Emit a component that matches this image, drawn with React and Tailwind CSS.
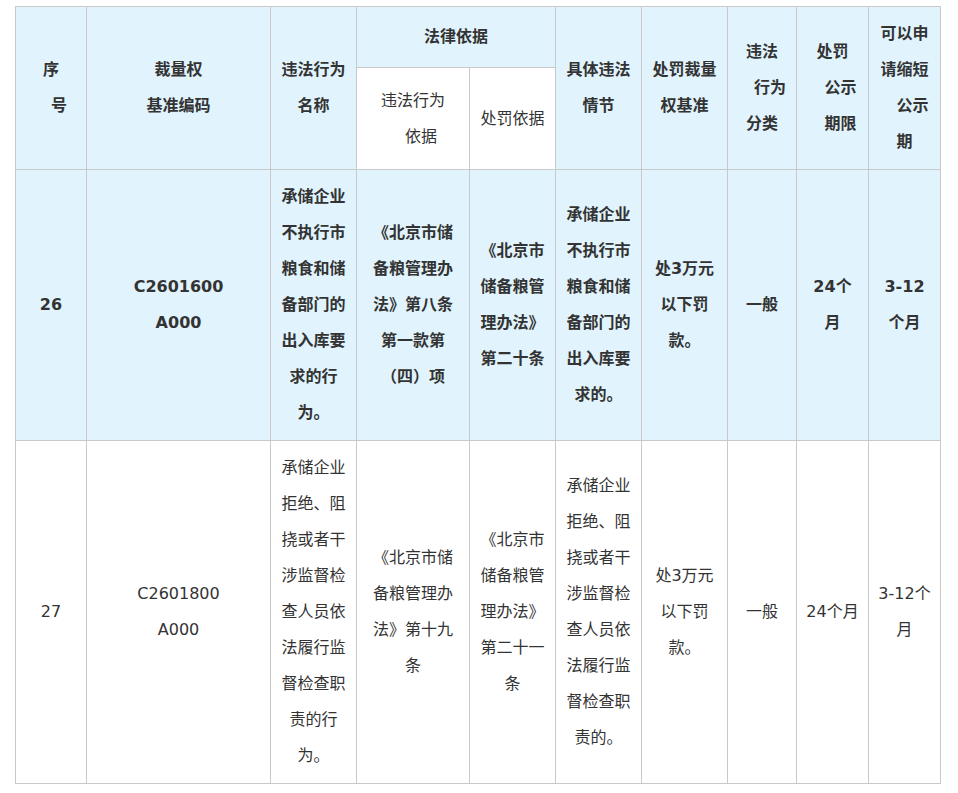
import React from "react";

const FONT = { fontFamily: '"DejaVu Sans", "Noto Sans CJK SC", sans-serif' };

function Cell({ lines, className = "", bold = false, white = false }) {
  return (
    <div
      className={
        "flex flex-col items-center justify-center text-center text-[16px] leading-[36px] text-[#333] " +
        (bold ? "font-bold " : "font-normal ") +
        (white ? "bg-white " : "bg-[#e1f3fd] ") +
        className
      }
    >
      {lines.map((l, i) => {
        const shift = typeof l === "object";
        const text = shift ? l.t : l;
        return (
          <div key={i} className={"whitespace-nowrap " + (shift ? "pl-4" : "")}>
            {text}
          </div>
        );
      })}
    </div>
  );
}

export default function App() {
  return (
    <div className="min-h-[793px] w-[958px] bg-white pt-[6px] pl-[15px]" style={FONT}>
      <div className="grid w-[926px] grid-cols-[70px_183px_85px_112px_85px_85px_85px_68px_71px_71px] grid-rows-[60px_101px_270px_342px] gap-px border border-[#c9c9c9] bg-[#c9c9c9]">
        {/* Header */}
        <Cell bold className="col-start-1 row-start-1 row-span-2" lines={["序", { t: "号" }]} />
        <Cell bold className="col-start-2 row-start-1 row-span-2" lines={["裁量权", "基准编码"]} />
        <Cell bold className="col-start-3 row-start-1 row-span-2" lines={["违法行为", "名称"]} />
        <Cell bold className="col-start-4 col-span-2 row-start-1" lines={["法律依据"]} />
        <Cell bold className="col-start-6 row-start-1 row-span-2" lines={["具体违法", "情节"]} />
        <Cell bold className="col-start-7 row-start-1 row-span-2" lines={["处罚裁量", "权基准"]} />
        <Cell bold className="col-start-8 row-start-1 row-span-2" lines={["违法", { t: "行为" }, "分类"]} />
        <Cell bold className="col-start-9 row-start-1 row-span-2" lines={["处罚", { t: "公示" }, { t: "期限" }]} />
        <Cell bold className="col-start-10 row-start-1 row-span-2" lines={["可以申", "请缩短", { t: "公示" }, "期"]} />
        <Cell white className="col-start-4 row-start-2" lines={["违法行为", { t: "依据" }]} />
        <Cell white className="col-start-5 row-start-2" lines={["处罚依据"]} />

        {/* Row 26 */}
        <Cell bold className="col-start-1 row-start-3" lines={["26"]} />
        <Cell bold className="col-start-2 row-start-3" lines={["C2601600", "A000"]} />
        <Cell
          bold
          className="col-start-3 row-start-3"
          lines={["承储企业", "不执行市", "粮食和储", "备部门的", "出入库要", "求的行", "为。"]}
        />
        <Cell
          bold
          className="col-start-4 row-start-3"
          lines={["《北京市储", "备粮管理办", "法》第八条", "第一款第", "（四）项"]}
        />
        <Cell bold className="col-start-5 row-start-3" lines={["《北京市", "储备粮管", "理办法》", "第二十条"]} />
        <Cell
          bold
          className="col-start-6 row-start-3"
          lines={["承储企业", "不执行市", "粮食和储", "备部门的", "出入库要", "求的。"]}
        />
        <Cell bold className="col-start-7 row-start-3" lines={["处3万元", "以下罚", "款。"]} />
        <Cell bold className="col-start-8 row-start-3" lines={["一般"]} />
        <Cell bold className="col-start-9 row-start-3" lines={["24个", "月"]} />
        <Cell bold className="col-start-10 row-start-3" lines={["3-12", "个月"]} />

        {/* Row 27 */}
        <Cell white className="col-start-1 row-start-4" lines={["27"]} />
        <Cell white className="col-start-2 row-start-4" lines={["C2601800", "A000"]} />
        <Cell
          white
          className="col-start-3 row-start-4"
          lines={["承储企业", "拒绝、阻", "挠或者干", "涉监督检", "查人员依", "法履行监", "督检查职", "责的行", "为。"]}
        />
        <Cell white className="col-start-4 row-start-4" lines={["《北京市储", "备粮管理办", "法》第十九", "条"]} />
        <Cell white className="col-start-5 row-start-4" lines={["《北京市", "储备粮管", "理办法》", "第二十一", "条"]} />
        <Cell
          white
          className="col-start-6 row-start-4"
          lines={["承储企业", "拒绝、阻", "挠或者干", "涉监督检", "查人员依", "法履行监", "督检查职", "责的。"]}
        />
        <Cell white className="col-start-7 row-start-4" lines={["处3万元", "以下罚", "款。"]} />
        <Cell white className="col-start-8 row-start-4" lines={["一般"]} />
        <Cell white className="col-start-9 row-start-4" lines={["24个月"]} />
        <Cell white className="col-start-10 row-start-4" lines={["3-12个", "月"]} />
      </div>
    </div>
  );
}
